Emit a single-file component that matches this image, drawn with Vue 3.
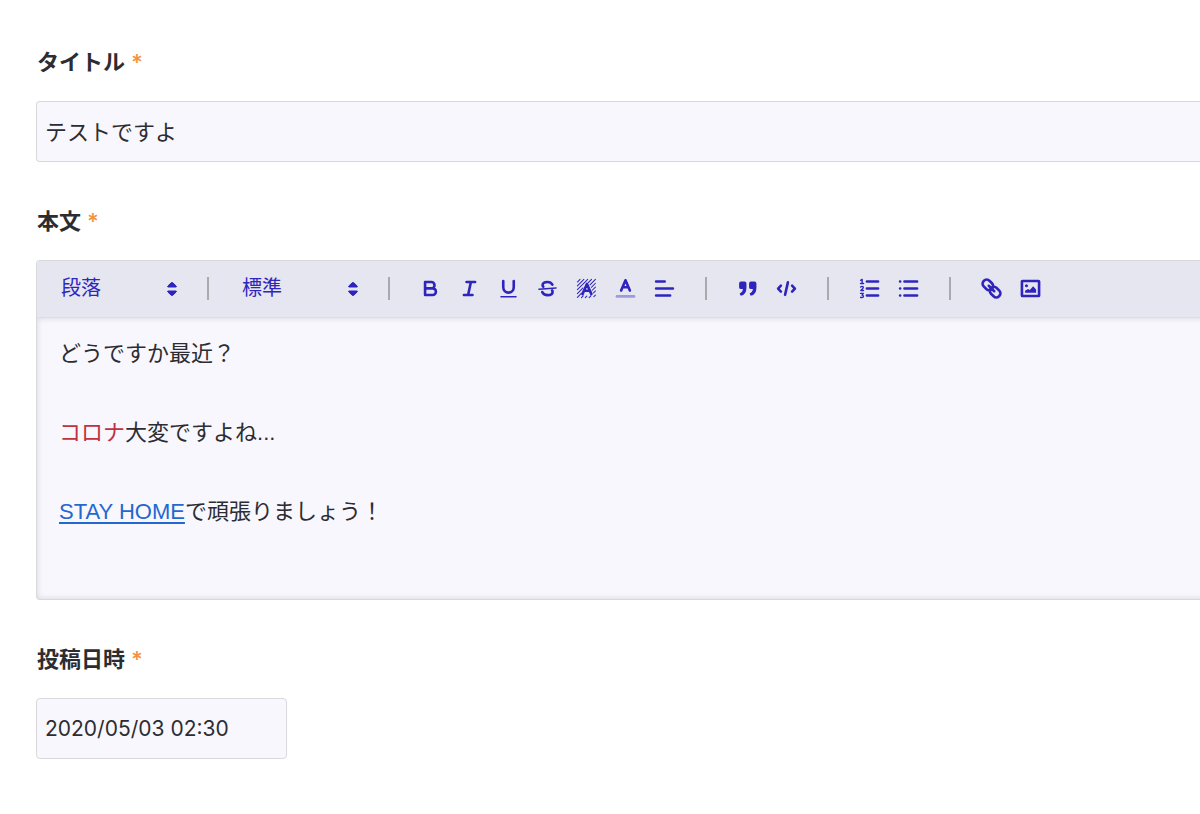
<script setup>
import { ref } from 'vue'

const title = ref('テストですよ')
const postedAt = ref('2020/05/03 02:30')
const block = ref('段落')
const size = ref('標準')
</script>

<template>
  <form class="form" @submit.prevent>
    <div class="field">
      <label class="label" for="title">タイトル<span class="req">*</span></label>
      <input id="title" v-model="title" class="input wide" type="text" required />
    </div>

    <div class="field">
      <div id="body-label" class="label">本文<span class="req">*</span></div>
      <div class="editor">
        <div class="toolbar" role="toolbar" aria-label="書式">
          <div class="picker">
            <select v-model="block" aria-label="段落の種類">
              <option>段落</option>
            </select>
            <svg class="caret" viewBox="0 0 10 16" aria-hidden="true"><path d="M4.4 1.6 H5.6 L9.2 5 V6 H0.8 V5 Z M4.4 14.4 H5.6 L9.2 11 V10 H0.8 V11 Z" /></svg>
          </div>
          <span class="sep"></span>
          <div class="picker">
            <select v-model="size" aria-label="文字サイズ">
              <option>標準</option>
            </select>
            <svg class="caret" viewBox="0 0 10 16" aria-hidden="true"><path d="M4.4 1.6 H5.6 L9.2 5 V6 H0.8 V5 Z M4.4 14.4 H5.6 L9.2 11 V10 H0.8 V11 Z" /></svg>
          </div>
          <span class="sep"></span>
          <div class="group">
            <button type="button" aria-label="太字">
              <svg viewBox="0 0 24 24"><path class="s3" d="M5.8 4.6 H13 a3.6 3.6 0 0 1 0 7.2 H5.8 Z M5.8 11.8 H14.4 a3.8 3.8 0 0 1 0 7.6 H5.8 Z" /></svg>
            </button>
            <button type="button" aria-label="斜体">
              <svg viewBox="0 0 24 24"><path class="s3" d="M8.6 4.6 H18.4 M5.6 19.4 H15.4 M13.6 4.6 L10.4 19.4" /></svg>
            </button>
            <button type="button" aria-label="下線">
              <svg viewBox="0 0 24 24"><path class="s3" d="M6 3.4 V10.5 a6 6.2 0 0 0 12 0 V3.4" /><path class="s1" d="M3.4 21.4 H20.6" /></svg>
            </button>
            <button type="button" aria-label="取り消し線">
              <svg viewBox="0 0 24 24"><path class="s3" d="M17.6 7.6 C16.4 5.4 14.4 4.5 12 4.5 C8.6 4.5 6.4 6 6.4 8.2 C6.4 9 6.7 9.6 7.2 10 M17.2 14.2 C17.6 14.7 17.8 15.4 17.8 16 C17.8 18.2 15.4 19.6 12.2 19.6 C9.1 19.6 7 18.4 6 16" /><path class="s1" d="M2.2 12.9 L21.8 11.3" /></svg>
            </button>
            <button type="button" aria-label="背景色">
              <svg viewBox="0 0 24 24"><path class="hatch" d="M1.6 4.6 L4.6 1.6 M1.6 9 L9 1.6 M1.6 13.4 L13.4 1.6 M1.6 17.8 L8 11.4 M14 5.4 L17.8 1.6 M1.6 22.2 L6.4 17.4 M16 7.8 L22.2 1.6 M17.6 10.6 L22.2 6 M18.6 14 L22.2 10.4 M20 17 L22.2 14.8 M20.4 21.4 L22.2 19.6 M6.2 22.4 L8.2 20.4 M10.6 22.4 L12.4 20.6 M15 22.4 L17 20.4" /><path class="s3" d="M7.4 18.4 L12.5 6.8 L17.6 18.4 M9.4 14.6 H15.6" /></svg>
            </button>
            <button type="button" aria-label="文字色">
              <svg viewBox="0 0 24 24"><path class="s3" d="M7 14.2 L12 2.6 L17 14.2 M9 10.6 H15" /><path class="s3 pale" d="M2.2 21 H21.8" /></svg>
            </button>
            <button type="button" aria-label="配置">
              <svg viewBox="0 0 24 24"><path class="s3" d="M2.4 4 H12.2 M2.4 12 H21.6 M2.4 20 H18.4" /></svg>
            </button>
          </div>
          <span class="sep"></span>
          <div class="group">
            <button type="button" aria-label="引用">
              <svg viewBox="0 0 24 24"><path d="M4.4 4 H8.6 Q10.8 4 10.8 6.2 V11 Q10.8 19 4.2 20.2 L3 17.8 Q6.4 16.6 6.8 12.7 H4.6 Q2.4 12.7 2.4 10.5 V6.2 Q2.4 4 4.4 4 Z M15.8 4 H20 Q22.2 4 22.2 6.2 V11 Q22.2 19 15.6 20.2 L14.4 17.8 Q17.8 16.6 18.2 12.7 H16 Q13.8 12.7 13.8 10.5 V6.2 Q13.8 4 15.8 4 Z" /></svg>
            </button>
            <button type="button" aria-label="コード">
              <svg viewBox="0 0 24 24"><path class="s3" d="M5.6 8.8 L2.4 12.2 L5.6 15.6 M18.4 8.8 L21.6 12.2 L18.4 15.6" /><path class="s3" d="M13.6 5 L10.4 19.2" /></svg>
            </button>
          </div>
          <span class="sep"></span>
          <div class="group">
            <button type="button" aria-label="番号付きリスト">
              <svg viewBox="0 0 24 24"><path class="s3" d="M9 4 H21.8 M9 12 H21.8 M9 20 H21.8" /><path class="digit" d="M1.8 2.6 L3.6 1.6 V6.2 M1.8 6.2 H5.2 M1.8 10.3 Q3.6 8.9 4.9 10.2 Q5.4 11.4 2 14.2 H5.2 M1.8 17.6 H4.9 L3.5 19.6 Q5.2 19.7 5 21.4 Q4.2 22.8 1.8 22.1" /></svg>
            </button>
            <button type="button" aria-label="箇条書き">
              <svg viewBox="0 0 24 24"><path class="s3" d="M7.4 4 H21.8 M7.4 12 H21.8 M7.4 20 H21.8 M2.4 4 H2.5 M2.4 12 H2.5 M2.4 20 H2.5" /></svg>
            </button>
          </div>
          <span class="sep"></span>
          <div class="group">
            <button type="button" aria-label="リンク">
              <svg viewBox="0 0 24 24"><g class="s3" transform="rotate(45 12 12)"><rect x="-0.4" y="7.4" width="13" height="9.2" rx="4.4" /><rect x="11.4" y="7.4" width="13" height="9.2" rx="4.4" /><path d="M7.6 12 H16.4" /></g></svg>
            </button>
            <button type="button" aria-label="画像">
              <svg viewBox="0 0 24 24"><rect class="s3" x="2.2" y="3.4" width="19.6" height="17.2" rx="0.6" /><circle cx="7.4" cy="8.8" r="1.8" /><path d="M5.8 16.8 V14.6 L9.2 12.6 L11.2 13.7 L15 9.4 L18.4 13.2 V16.8 Z" /></svg>
            </button>
          </div>
        </div>
        <div class="content" contenteditable="true" role="textbox" aria-multiline="true" aria-labelledby="body-label">
          <p>どうですか最近？</p>
          <p><span class="red">コロナ</span>大変ですよね...</p>
          <p><a href="#">STAY HOME</a>で頑張りましょう！</p>
        </div>
      </div>
    </div>

    <div class="field">
      <label class="label" for="posted">投稿日時<span class="req">*</span></label>
      <input id="posted" v-model="postedAt" class="input date" type="text" required />
    </div>
  </form>
</template>

<style>
body {
  margin: 0;
  background: #fff;
}
</style>

<style scoped>
.form {
  padding: 46px 0 12px 36px;
  color: #2c2d32;
  font-family: "Liberation Sans", "Noto Sans CJK JP", sans-serif;
  font-size: 22px;
}
.field {
  margin-bottom: 43px;
}
.label {
  display: block;
  margin-bottom: 22px;
  padding-left: 1px;
  line-height: 33px;
  font-weight: 700;
}
.req {
  margin-left: 6px;
  color: #f6923c;
  font-family: Inter, sans-serif;
  font-weight: 600;
}
.input {
  display: block;
  box-sizing: border-box;
  height: 61px;
  padding: 0 8px;
  border: 1px solid #d9d9dc;
  border-radius: 4px;
  background: #f8f7fd;
  color: inherit;
  font: inherit;
  outline: none;
}
.wide {
  width: 100%;
  padding-bottom: 4px;
  border-right: 0;
  border-radius: 4px 0 0 4px;
}
.date {
  width: 251px;
  font-family: Inter, sans-serif;
  font-size: 21px;
}
.editor {
  overflow: hidden;
  border: 1px solid #d9d9dc;
  border-right: 0;
  border-radius: 4px 0 0 4px;
  background: #f8f7fd;
}
.toolbar {
  display: flex;
  align-items: center;
  box-sizing: border-box;
  height: 56px;
  padding: 0 12px 2px;
  background: #e6e6f0;
  color: #2f25bd;
}
.picker {
  position: relative;
  width: 137px;
}
.picker select {
  display: block;
  width: 100%;
  height: 40px;
  padding: 0 12px;
  border: 0;
  appearance: none;
  background: transparent;
  color: inherit;
  font: inherit;
  font-size: 20px;
  outline: none;
}
.caret {
  position: absolute;
  top: 13px;
  right: 9px;
  width: 10px;
  height: 16px;
  pointer-events: none;
  stroke: currentColor;
  stroke-width: 1;
  stroke-linejoin: round;
}
.sep {
  width: 2px;
  height: 23px;
  margin: 0 21px;
  background: #a9a9ae;
}
.group {
  display: flex;
}
button {
  display: grid;
  place-items: center;
  width: 39px;
  height: 40px;
  padding: 0;
  border: 0;
  background: none;
  color: inherit;
}
svg {
  fill: currentColor;
}
button svg {
  width: 21px;
  height: 21px;
  overflow: visible;
}
.s1,
.s3,
.hatch,
.digit {
  fill: none;
  stroke: currentColor;
  stroke-linecap: round;
  stroke-linejoin: round;
}
.s1 {
  stroke-width: 1.7;
}
.s3 {
  stroke-width: 3;
}
.hatch {
  stroke-width: 1.2;
}
.digit {
  stroke-width: 1.6;
}
.pale {
  stroke: #9f9add;
}
.content {
  min-height: 282px;
  box-sizing: border-box;
  margin-right: -8px;
  padding: 16px 30px 16px 22px;
  border-top: 1px solid #dddde3;
  box-shadow: inset 0 0 6px rgba(0, 0, 0, 0.14);
  outline: none;
}
.content p {
  margin: 0 0 40px;
  line-height: 39px;
}
.content p:last-child {
  margin-bottom: 0;
}
.red {
  color: #bf3340;
}
.content a {
  color: #2468cf;
  text-underline-offset: 3px;
}
</style>
